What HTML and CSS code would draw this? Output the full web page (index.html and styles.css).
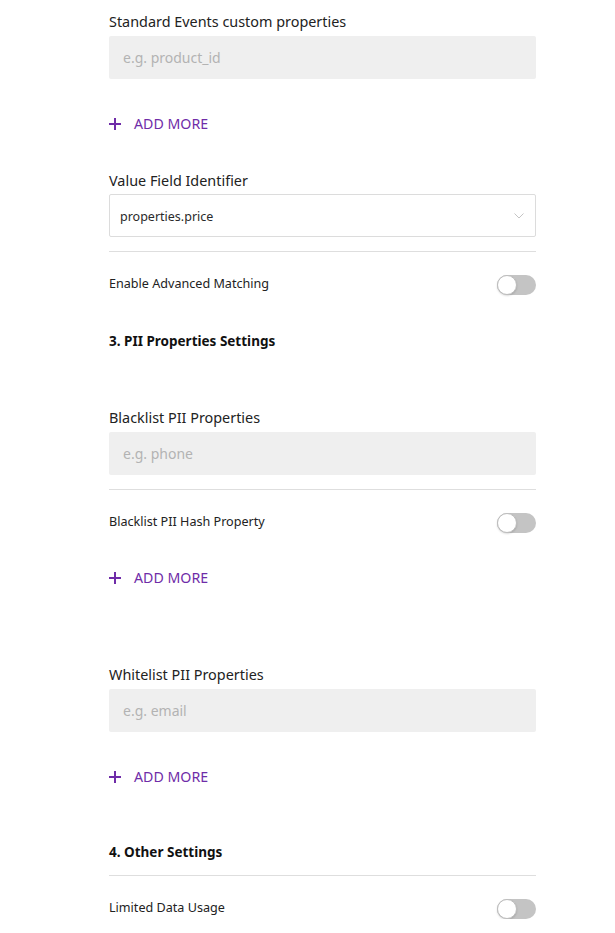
FILE: index.html
```html
<!DOCTYPE html>
<html>
<head>
<meta charset="utf-8">
<link rel="stylesheet" href="styles.css">
</head>
<body>
<div class="form">
  <label class="label l1">Standard Events custom properties</label>
  <div class="input"><span class="ph">e.g. product_id</span></div>
  <div class="add a1"><svg class="plus" width="12" height="12" viewBox="0 0 12 12"><path d="M6 0v12M0 6h12" stroke="currentColor" stroke-width="2"/></svg><span>ADD MORE</span></div>

  <label class="label l2">Value Field Identifier</label>
  <div class="select"><span class="sel-text">properties.price</span><svg class="chev" width="10" height="6" viewBox="0 0 10 6"><path d="M0.5 0.5L5 5L9.5 0.5" fill="none" stroke="#c4c4c4" stroke-width="1"/></svg></div>
  <div class="divider d1"></div>
  <div class="toggle-row t1"><span class="tl">Enable Advanced Matching</span><div class="toggle"><div class="knob"></div></div></div>

  <h3 class="heading h1">3. PII Properties Settings</h3>

  <label class="label l3">Blacklist PII Properties</label>
  <div class="input"><span class="ph">e.g. phone</span></div>
  <div class="divider d1"></div>
  <div class="toggle-row t1"><span class="tl">Blacklist PII Hash Property</span><div class="toggle"><div class="knob"></div></div></div>
  <div class="add a1"><svg class="plus" width="12" height="12" viewBox="0 0 12 12"><path d="M6 0v12M0 6h12" stroke="currentColor" stroke-width="2"/></svg><span>ADD MORE</span></div>

  <label class="label l4">Whitelist PII Properties</label>
  <div class="input"><span class="ph">e.g. email</span></div>
  <div class="add a1"><svg class="plus" width="12" height="12" viewBox="0 0 12 12"><path d="M6 0v12M0 6h12" stroke="currentColor" stroke-width="2"/></svg><span>ADD MORE</span></div>

  <h3 class="heading h2">4. Other Settings</h3>
  <div class="divider d2"></div>
  <div class="toggle-row t1"><span class="tl">Limited Data Usage</span><div class="toggle"><div class="knob"></div></div></div>
</div>
</body>
</html>
```
FILE: styles.css
```css
* { box-sizing: border-box; }
body {
  margin: 0;
  background: #fff;
  font-family: "Noto Sans", "Open Sans", sans-serif;
  color: #1f1f1f;
}
.form {
  width: 427px;
  margin-left: 109px;
  padding-top: 12px;
  display: flex;
  flex-direction: column;
}
.label {
  display: block;
  font-size: 14.4px;
  line-height: 20px;
  height: 20px;
  color: #222;
}
.l1 { margin-top: 0; margin-bottom: 4px; }
.l2 { margin-top: 37px; margin-bottom: 3px; }
.l3 { margin-top: 57px; margin-bottom: 4px; }
.l4 { margin-top: 77px; margin-bottom: 4px; }
.input {
  height: 43px;
  background: #efefef;
  border-radius: 2px;
  display: flex;
  align-items: center;
  padding-left: 14px;
  font-size: 14px;
}
.ph { color: #b3b3b3; }
.add {
  display: flex;
  align-items: center;
  height: 20px;
  margin-top: 35px;
  color: #6f2ca8;
  font-size: 14.2px;
  line-height: 20px;
}
.plus { margin-right: 13px; }
.select {
  height: 43px;
  border: 1px solid #dcdcdc;
  border-radius: 2px;
  display: flex;
  align-items: center;
  justify-content: space-between;
  padding: 0 11px 0 10px;
  font-size: 12.5px;
  color: #2a2a2a;
}
.sel-text { margin-top: 2px; }
.chev { margin-top: 1px; }
.divider {
  height: 1px;
  background: #dedede;
}
.d1 { margin-top: 14px; }
.d2 { margin-top: 13px; }
.toggle-row {
  display: flex;
  align-items: center;
  justify-content: space-between;
  height: 20px;
  margin-top: 23px;
  font-size: 12.6px;
  color: #222;
}
.tl { margin-bottom: 3px; }
.toggle {
  width: 39px;
  height: 20px;
  border-radius: 10px;
  background: #c4c4c4;
  position: relative;
}
.knob {
  position: absolute;
  left: 0;
  top: 0;
  width: 20px;
  height: 20px;
  border-radius: 50%;
  background: #fff;
  border: 1px solid #bdbdbd;
  box-shadow: 0 1px 2px rgba(0,0,0,0.15);
}
.heading {
  margin: 0;
  font-size: 13.5px;
  font-weight: 700;
  line-height: 20px;
  height: 20px;
  color: #111;
}
.h1 { margin-top: 36px; }
.h2 { margin-top: 55px; }
```
